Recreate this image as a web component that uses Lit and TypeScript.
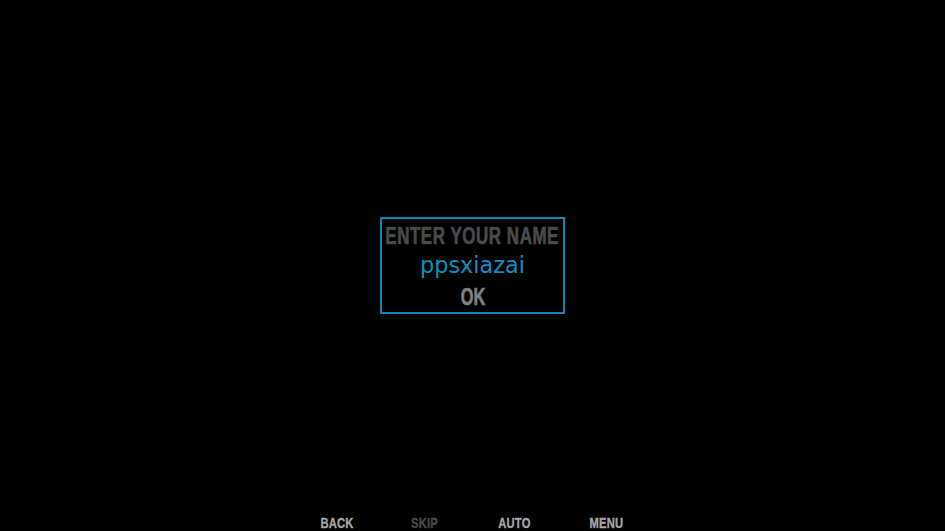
import { LitElement, html, css } from "lit";
import { customElement } from "lit/decorators.js";

@customElement("app-root")
export class AppRoot extends LitElement {
  static styles = css`
    :host {
      display: flex;
      flex-direction: column;
      width: 945px;
      height: 531px;
      background: #000;
      overflow: hidden;
      font-family: "Liberation Sans", Arial, sans-serif;
      font-weight: 700;
    }
    .stage {
      flex: 1;
      display: flex;
      justify-content: center;
      padding-top: 217px;
      box-sizing: border-box;
    }
    .dialog {
      width: 185px;
      height: 97px;
      box-sizing: border-box;
      border: 2px solid #0f87b4;
      display: flex;
      flex-direction: column;
      align-items: center;
    }
    .squeeze {
      display: inline-block;
      white-space: nowrap;
      transform-origin: center;
    }
    .title {
      margin-top: 3px;
      height: 28px;
      display: flex;
      justify-content: center;
      align-items: center;
      font-size: 24px;
      line-height: 28px;
      color: #4a4a4a;
    }
    .title .squeeze {
      letter-spacing: 0.8px;
      transform: scaleX(0.705);
      -webkit-text-stroke: 0.7px #4a4a4a;
    }
    .name {
      margin-top: 2px;
      font-family: "DejaVu Sans", sans-serif;
      font-weight: 400;
      font-size: 22.4px;
      line-height: 26px;
      color: #0f8fc0;
    }
    .ok {
      margin-top: 5px;
      font-size: 24px;
      line-height: 28px;
      color: #808080;
    }
    .ok .squeeze {
      transform: scaleX(0.68);
      -webkit-text-stroke: 0.7px #808080;
    }
    .nav {
      display: grid;
      grid-template-columns: 33px 29px 33px 35px;
      column-gap: 58px;
      justify-content: center;
      height: 16px;
      padding-right: 1px;
      align-items: start;
    }
    .item {
      display: flex;
      justify-content: center;
      font-size: 15.5px;
      line-height: 15px;
      color: #a6a6a6;
    }
    .item .squeeze {
      letter-spacing: 0.3px;
      transform: scaleX(0.72);
      -webkit-text-stroke: 0.4px #a6a6a6;
    }
    .item.off {
      justify-content: flex-start;
      color: #4a4a4a;
    }
    .item.off .squeeze {
      transform-origin: left center;
      -webkit-text-stroke: 0.4px #4a4a4a;
    }
  `;

  render() {
    return html`
      <div class="stage">
        <div class="dialog">
          <div class="title"><span class="squeeze">ENTER YOUR NAME</span></div>
          <div class="name">ppsxiazai</div>
          <div class="ok"><span class="squeeze">OK</span></div>
        </div>
      </div>
      <div class="nav">
        <div class="item"><span class="squeeze">BACK</span></div>
        <div class="item off"><span class="squeeze">SKIP</span></div>
        <div class="item"><span class="squeeze">AUTO</span></div>
        <div class="item"><span class="squeeze">MENU</span></div>
      </div>
    `;
  }
}
